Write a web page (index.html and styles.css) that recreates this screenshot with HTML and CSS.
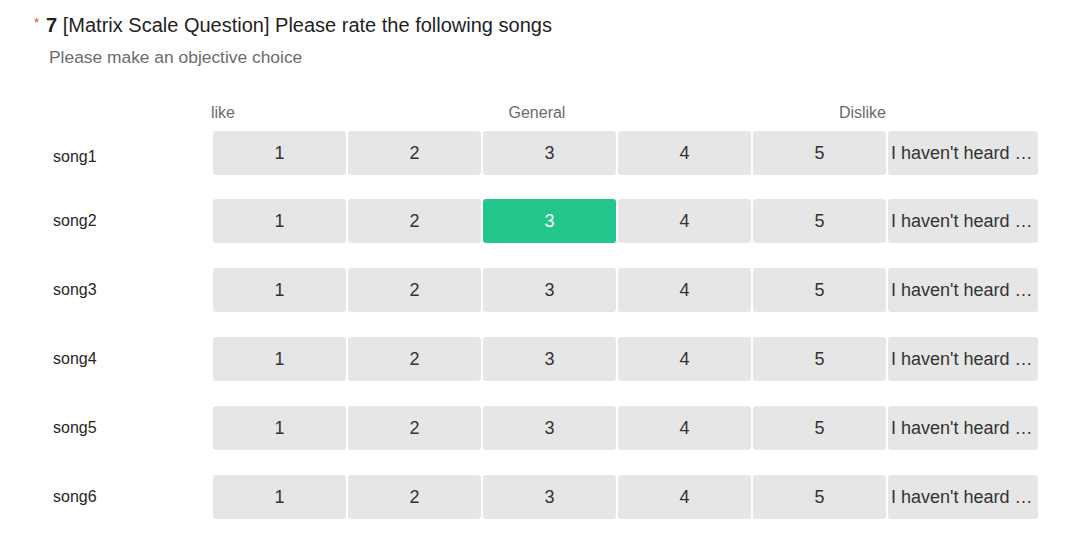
FILE: index.html
```html
<!DOCTYPE html>
<html lang="en">
<head>
<meta charset="utf-8">
<title>Matrix Scale Question</title>
<link rel="stylesheet" href="styles.css">
</head>
<body>
<div class="question">
  <div class="title"><span class="req">*</span><span class="num">7</span> [Matrix Scale Question] Please rate the following songs</div>
  <div class="desc">Please make an objective choice</div>
  <div class="matrix">
    <div class="row head-row">
      <div class="spacer"></div>
      <div class="scale-head"><span>like</span><span>General</span><span>Dislike</span></div>
    </div>
    <div class="rows">
      <div class="row">
        <div class="label first">song1</div>
        <div class="opt">1</div><div class="opt">2</div><div class="opt">3</div><div class="opt">4</div><div class="opt">5</div><div class="opt other" title="I haven't heard of it">I haven't heard of it</div>
      </div>
      <div class="row">
        <div class="label">song2</div>
        <div class="opt">1</div><div class="opt">2</div><div class="opt selected">3</div><div class="opt">4</div><div class="opt">5</div><div class="opt other" title="I haven't heard of it">I haven't heard of it</div>
      </div>
      <div class="row">
        <div class="label">song3</div>
        <div class="opt">1</div><div class="opt">2</div><div class="opt">3</div><div class="opt">4</div><div class="opt">5</div><div class="opt other" title="I haven't heard of it">I haven't heard of it</div>
      </div>
      <div class="row">
        <div class="label">song4</div>
        <div class="opt">1</div><div class="opt">2</div><div class="opt">3</div><div class="opt">4</div><div class="opt">5</div><div class="opt other" title="I haven't heard of it">I haven't heard of it</div>
      </div>
      <div class="row">
        <div class="label">song5</div>
        <div class="opt">1</div><div class="opt">2</div><div class="opt">3</div><div class="opt">4</div><div class="opt">5</div><div class="opt other" title="I haven't heard of it">I haven't heard of it</div>
      </div>
      <div class="row">
        <div class="label">song6</div>
        <div class="opt">1</div><div class="opt">2</div><div class="opt">3</div><div class="opt">4</div><div class="opt">5</div><div class="opt other" title="I haven't heard of it">I haven't heard of it</div>
      </div>
    </div>
  </div>
</div>
</body>
</html>
```
FILE: styles.css
```css
html, body {
  margin: 0;
  padding: 0;
  background: #ffffff;
}
body {
  font-family: "Liberation Sans", Arial, sans-serif;
  color: #262626;
}
.question {
  padding: 10.5px 0 0 34px;
}
.title {
  font-size: 20px;
  line-height: 24px;
  color: #1f1f1f;
  white-space: nowrap;
}
.req {
  color: #f04134;
  font-size: 13px;
  vertical-align: 5px;
  margin-right: 7px;
}
.num {
  font-weight: bold;
}
.desc {
  margin-top: 8.5px;
  margin-left: 15px;
  font-size: 17.4px;
  line-height: 24px;
  color: #6b6b6b;
}
.matrix {
  margin-top: 31.5px;
  margin-left: 19px;
}
.row {
  display: grid;
  grid-template-columns: 158px repeat(5, 133px) 150px;
  column-gap: 2px;
}
.head-row {
  margin-bottom: 6px;
}
.scale-head {
  grid-column: 2 / 7;
  margin-left: -2px;
  display: flex;
  justify-content: space-between;
  font-size: 16px;
  line-height: 24px;
  color: #6b6b6b;
}
.rows {
  display: flex;
  flex-direction: column;
  gap: 24.9px;
}
.label {
  font-size: 16px;
  line-height: 44px;
  height: 44px;
  color: #262626;
}
.label.first {
  line-height: 51px;
}
.opt {
  height: 44px;
  line-height: 44px;
  background: #e6e6e6;
  border-radius: 3px;
  text-align: center;
  font-size: 18px;
  color: #333333;
}
.opt.selected {
  background: #23c68b;
  color: #ffffff;
}
.opt.other {
  text-align: left;
  padding: 0 3px;
  white-space: nowrap;
  overflow: hidden;
  text-overflow: ellipsis;
}
```
